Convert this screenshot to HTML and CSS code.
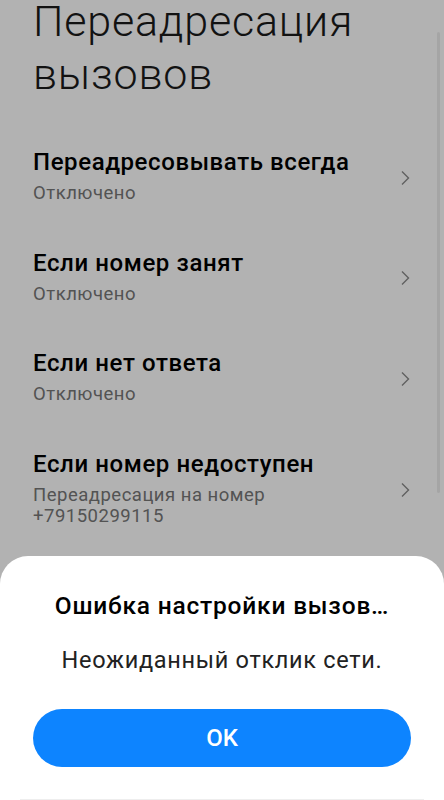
FILE: index.html
```html
<!DOCTYPE html>
<html>
<head>
	<meta charset="utf-8">
	<title>Переадресация вызовов</title>
	<link rel="stylesheet" href="styles.css">
</head>
<body>
	<div class="page">
		<h1 class="page-title">Переадресация вызовов</h1>

		<div class="fwd-list">
			<div class="fwd-item">
				<div class="fwd-text">
					<div class="fwd-name">Переадресовывать всегда</div>
					<div class="fwd-state">Отключено</div>
				</div>
				<svg class="chevron" width="10" height="16" viewBox="0 0 10 16"><path d="M2 1.5 L8.5 8 L2 14.5" fill="none" stroke="#8a8a8a" stroke-width="1.4"/></svg>
			</div>
			<div class="fwd-item">
				<div class="fwd-text">
					<div class="fwd-name">Если номер занят</div>
					<div class="fwd-state">Отключено</div>
				</div>
				<svg class="chevron" width="10" height="16" viewBox="0 0 10 16"><path d="M2 1.5 L8.5 8 L2 14.5" fill="none" stroke="#8a8a8a" stroke-width="1.4"/></svg>
			</div>
			<div class="fwd-item">
				<div class="fwd-text">
					<div class="fwd-name">Если нет ответа</div>
					<div class="fwd-state">Отключено</div>
				</div>
				<svg class="chevron" width="10" height="16" viewBox="0 0 10 16"><path d="M2 1.5 L8.5 8 L2 14.5" fill="none" stroke="#8a8a8a" stroke-width="1.4"/></svg>
			</div>
			<div class="fwd-item">
				<div class="fwd-text">
					<div class="fwd-name">Если номер недоступен</div>
					<div class="fwd-state">Переадресация на номер<br>+79150299115</div>
				</div>
				<svg class="chevron" width="10" height="16" viewBox="0 0 10 16"><path d="M2 1.5 L8.5 8 L2 14.5" fill="none" stroke="#8a8a8a" stroke-width="1.4"/></svg>
			</div>
		</div>
	</div>

	<div class="scrollbar"></div>
	<div class="dim"></div>

	<div class="sheet">
		<div class="sheet-title">Ошибка настройки вызов…</div>
		<div class="sheet-msg">Неожиданный отклик сети.</div>
		<button class="btn-ok" type="button">OK</button>
		<div class="sheet-bottom"></div>
	</div>
</body>
</html>
```

FILE: styles.css
```css
body {
	margin: 0;
	background: #fff;
	font-family: Roboto, "Noto Sans", sans-serif;
	color: #000;
	height: 800px;
	overflow: hidden;
}
.page {
	padding: 0 33px;
}
.page-title {
	margin: -5px 0 0 0;
	font-size: 43px;
	line-height: 53px;
	font-weight: 300;
	color: #1a1a1a;
	letter-spacing: 0.8px;
}
.fwd-list {
	margin-top: 24px;
}
.fwd-item {
	display: flex;
	align-items: center;
	padding: 22px 0 21px 0;
}
.fwd-text {
	flex: 1;
}
.fwd-name {
	font-size: 24px;
	line-height: 30px;
	font-weight: 500;
	color: #000;
	letter-spacing: 0.6px;
}
.fwd-state {
	margin-top: 6px;
	font-size: 18.5px;
	line-height: 21.5px;
	color: #777;
	letter-spacing: 0.5px;
}
.chevron {
	margin-right: 1px;
	margin-top: 4px;
}

.scrollbar {
	position: absolute;
	left: 437px;
	top: 32px;
	width: 3px;
	height: 461px;
	border-radius: 2px;
	background: rgba(0, 0, 0, 0.07);
}
.dim {
	position: fixed;
	left: 0;
	top: 0;
	right: 0;
	bottom: 0;
	background: rgba(0, 0, 0, 0.3);
}

.sheet {
	position: fixed;
	left: 0;
	right: 0;
	bottom: 0;
	height: 244px;
	background: #fff;
	border-radius: 28px 28px 0 0;
	display: flex;
	flex-direction: column;
	align-items: center;
}
.sheet-title {
	margin-top: 35px;
	font-size: 24.5px;
	line-height: 30px;
	font-weight: 500;
	color: #000;
	letter-spacing: 0.8px;
}
.sheet-msg {
	margin-top: 24px;
	font-size: 23.5px;
	line-height: 30px;
	color: #222;
	letter-spacing: 0.7px;
}
.btn-ok {
	margin-top: 34px;
	width: 378px;
	height: 58px;
	flex-shrink: 0;
	border: none;
	border-radius: 29px;
	background: #0d84ff;
	color: #fff;
	font-family: Roboto, "Noto Sans", sans-serif;
	font-size: 24px;
	font-weight: 500;
}
.sheet-bottom {
	margin-top: auto;
	width: 404px;
	border-top: 1px solid #eeeeee;
}
```
